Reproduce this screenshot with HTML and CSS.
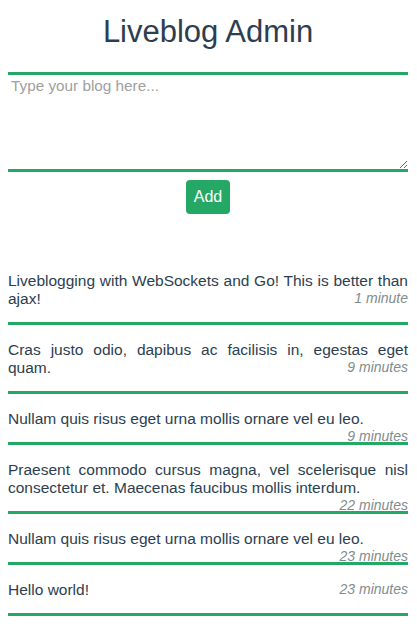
FILE: index.html
```html
<!DOCTYPE html>
<html lang="en">
<head>
  <meta charset="UTF-8">
  <meta name="viewport" content="width=device-width, initial-scale=1.0">
  <title>Liveblog Admin</title>
  <link rel="stylesheet" href="styles.css">
</head>
<body>
  <div class="container">
    <h1>Liveblog Admin</h1>

    <form id="postForm" class="post-form">
      <textarea id="post" placeholder="Type your blog here..." autofocus></textarea>
      <div class="actions">
        <button type="submit">Add</button>
      </div>
    </form>

    <div class="entries">
      <div class="entry">
        <p>Liveblogging with WebSockets and Go! This is better than ajax!<span class="time">1 minute</span></p>
      </div>
      <div class="entry">
        <p>Cras justo odio, dapibus ac facilisis in, egestas eget quam.<span class="time">9 minutes</span></p>
      </div>
      <div class="entry">
        <p>Nullam quis risus eget urna mollis ornare vel eu leo.<span class="time">9 minutes</span></p>
      </div>
      <div class="entry">
        <p>Praesent commodo cursus magna, vel scelerisque nisl consectetur et. Maecenas faucibus mollis interdum.<span class="time">22 minutes</span></p>
      </div>
      <div class="entry">
        <p>Nullam quis risus eget urna mollis ornare vel eu leo.<span class="time">23 minutes</span></p>
      </div>
      <div class="entry">
        <p>Hello world!<span class="time">23 minutes</span></p>
      </div>
    </div>
  </div>
</body>
</html>
```

FILE: styles.css
```css
:root {
  --green: #25a865;
  --text: #2c3e50;
  --muted: #7f8c8d;
  --placeholder: #a0a0a0;
}

body {
  margin: 0;
  padding: 0;
  font-family: 'Liberation Sans', Helvetica, Arial, sans-serif;
  color: var(--text);
  background: #fff;
}

.container {
  padding: 0 9px 0 8px;
}

h1 {
  margin: 14px 0 22px;
  font-size: 31px;
  line-height: 36px;
  font-weight: normal;
  text-align: center;
  color: var(--text);
}

.post-form textarea {
  display: block;
  box-sizing: border-box;
  width: 100%;
  height: 100px;
  margin: 0;
  padding: 2px 3px;
  border: none;
  border-top: 3px solid var(--green);
  border-bottom: 3px solid var(--green);
  font-family: inherit;
  font-size: 15.3px;
  color: var(--text);
  outline: none;
}

.post-form textarea::placeholder {
  color: var(--placeholder);
}

.actions {
  display: flex;
  justify-content: center;
  margin-top: 8px;
}

.actions button {
  padding: 8px 7.5px;
  border: none;
  border-radius: 4px;
  background: var(--green);
  color: #fff;
  font-family: inherit;
  font-size: 16px;
  line-height: 18px;
  cursor: pointer;
}

.entries {
  margin-top: 42px;
}

.entry {
  padding: 16px 0 14px;
  border-bottom: 3px solid var(--green);
}

.entry p {
  margin: 0;
  font-size: 15.5px;
  line-height: 18px;
  text-align: justify;
}

.entry .time {
  float: right;
  font-size: 14px;
  line-height: 16px;
  font-style: italic;
  color: var(--muted);
}
```
